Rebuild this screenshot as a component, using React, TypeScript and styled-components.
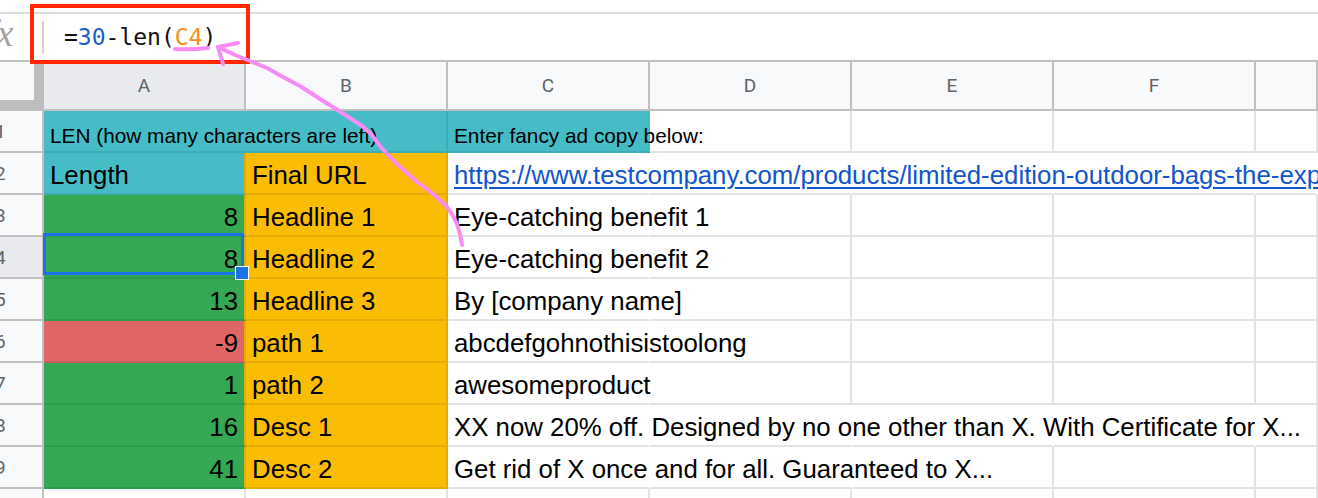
import React from 'react';
import styled, { createGlobalStyle, css } from 'styled-components';

const GlobalStyle = createGlobalStyle`
  html, body {
    margin: 0;
    padding: 0;
    background: #ffffff;
  }
  body {
    font-family: "Liberation Sans", Arial, sans-serif;
    overflow: hidden;
  }
`;

const Page = styled.div`
  position: relative;
  width: 1318px;
  height: 498px;
  overflow: hidden;
  background: #ffffff;
`;

const TopStrip = styled.div`
  height: 12px;
  border-bottom: 2px solid #dadce0;
`;

const FormulaBar = styled.div`
  display: flex;
  align-items: center;
  height: 46px;
  border-bottom: 2px solid #c0c0c0;
`;

const FxLabel = styled.div`
  width: 42px;
  height: 100%;
  overflow: hidden;
  display: flex;
  align-items: center;
  font-family: "Liberation Serif", "DejaVu Serif", serif;
  font-style: italic;
  font-size: 38px;
  color: #a3a3a3;

  span {
    margin-left: -14px;
    margin-top: -8px;
  }
`;

const Divider = styled.div`
  width: 2px;
  height: 33px;
  background: #d3d3d3;
`;

const Formula = styled.div`
  margin-left: 20px;
  font-family: "DejaVu Sans Mono", "Liberation Mono", monospace;
  font-size: 23px;
  white-space: pre;
  color: #111111;
`;

const Token = styled.span<{ $kind?: 'num' | 'ref' }>`
  color: ${p => (p.$kind === 'num' ? '#1a5fd0' : p.$kind === 'ref' ? '#f3911c' : '#111111')};
`;

const Sheet = styled.div`
  display: grid;
  grid-template-columns: 44px repeat(6, 202px) 1fr;
  grid-template-rows: 49px repeat(10, 42px);
`;

const Corner = styled.div`
  background: #f8f9fa;
  border-bottom: 2px solid #c0c0c0;
  box-shadow: inset -10px -9px 0 #bdbdbd;
`;

const ColHead = styled.div<{ $active?: boolean }>`
  display: flex;
  align-items: center;
  justify-content: center;
  background: ${p => (p.$active ? '#e8eaed' : '#f8f9fa')};
  border-right: 2px solid #c0c0c0;
  border-bottom: 2px solid #c0c0c0;
  font-family: Roboto, "Liberation Sans", sans-serif;
  font-size: 19px;
  color: #5f6368;
`;

const RowHead = styled.div<{ $active?: boolean }>`
  display: flex;
  align-items: center;
  overflow: hidden;
  background: ${p => (p.$active ? '#e8eaed' : '#f8f9fa')};
  border-right: 2px solid #c0c0c0;
  border-bottom: 2px solid #c0c0c0;
  font-family: Roboto, "Liberation Sans", sans-serif;
  font-size: 19px;
  color: #5f6368;

  span {
    margin-left: -5px;
  }
`;

const Cell = styled.div<{
  $fill?: string;
  $line?: string;
  $rightLine?: string;
  $align?: 'left' | 'right';
  $small?: boolean;
  $open?: boolean;
  $span?: number;
  $selected?: boolean;
}>`
  position: relative;
  min-width: 0;
  display: flex;
  align-items: flex-end;
  justify-content: ${p => (p.$align === 'right' ? 'flex-end' : 'flex-start')};
  grid-column: ${p => (p.$span ? `span ${p.$span}` : 'auto')};
  padding: 0 6px ${p => (p.$small ? '3px' : '4px')};
  background: ${p => p.$fill ?? 'transparent'};
  border-right: 2px solid
    ${p => (p.$open ? 'transparent' : p.$rightLine ?? p.$line ?? '#e2e3e3')};
  border-bottom: 2px solid ${p => p.$line ?? '#e2e3e3'};
  white-space: nowrap;
  font-size: ${p => (p.$small ? '20.8px' : '25.8px')};
  line-height: ${p => (p.$small ? '24px' : '28px')};
  color: #000000;

  ${p =>
    p.$selected &&
    css`
      &::after {
        content: '';
        position: absolute;
        left: -1px;
        top: -4px;
        right: 0;
        bottom: 2px;
        border: 3px solid #1a73e8;
      }
      &::before {
        content: '';
        position: absolute;
        right: -5px;
        bottom: -3px;
        width: 12px;
        height: 12px;
        background: #1a73e8;
        border: 1px solid #ffffff;
        z-index: 2;
      }
    `}
`;

const Link = styled.span`
  color: #1155cc;
  text-decoration: underline;
  text-underline-offset: 3px;
`;

const Overlay = styled.svg`
  position: absolute;
  left: 0;
  top: 0;
  pointer-events: none;
`;

const RedBox = styled.div`
  position: absolute;
  left: 30px;
  top: 4px;
  width: 220px;
  height: 60px;
  box-sizing: border-box;
  border: 4px solid #ff2600;
  pointer-events: none;
`;

const FILLS = {
  teal: { fill: '#46bdc6', line: '#3fabb3' },
  amber: { fill: '#fbbc04', line: '#e6ac06' },
  green: { fill: '#34a853', line: '#2f9a4b' },
  red: { fill: '#e06666', line: '#cd5d5d' },
};

type FillKey = keyof typeof FILLS;

interface SheetRow {
  num: number;
  a?: string;
  aFill?: FillKey;
  aAlign?: 'left' | 'right';
  b?: string;
  bFill?: FillKey;
  c?: string;
  link?: boolean;
  spill: number;
}

const ROWS: SheetRow[] = [
  { num: 2, a: 'Length', aFill: 'teal', aAlign: 'left', b: 'Final URL', bFill: 'amber', c: 'https://www.testcompany.com/products/limited-edition-outdoor-bags-the-explorer-series', link: true, spill: 5 },
  { num: 3, a: '8', aFill: 'green', b: 'Headline 1', bFill: 'amber', c: 'Eye-catching benefit 1', spill: 1 },
  { num: 4, a: '8', aFill: 'green', b: 'Headline 2', bFill: 'amber', c: 'Eye-catching benefit 2', spill: 1 },
  { num: 5, a: '13', aFill: 'green', b: 'Headline 3', bFill: 'amber', c: 'By [company name]', spill: 1 },
  { num: 6, a: '-9', aFill: 'red', b: 'path 1', bFill: 'amber', c: 'abcdefgohnothisistoolong', spill: 1 },
  { num: 7, a: '1', aFill: 'green', b: 'path 2', bFill: 'amber', c: 'awesomeproduct', spill: 1 },
  { num: 8, a: '16', aFill: 'green', b: 'Desc 1', bFill: 'amber', c: 'XX now 20% off. Designed by no one other than X. With Certificate for X...', spill: 4 },
  { num: 9, a: '41', aFill: 'green', b: 'Desc 2', bFill: 'amber', c: 'Get rid of X once and for all. Guaranteed to X...', spill: 2 },
  { num: 10, spill: 0 },
];

const COLS = ['A', 'B', 'C', 'D', 'E', 'F', ''];

const Arrow = () => (
  <Overlay width="1318" height="498" viewBox="0 0 1318 498">
    <g fill="none" stroke="#f78cf5" strokeWidth="4" strokeLinecap="round" strokeLinejoin="round">
      <polyline points="462,245 460,234 457,224 453,216 447,207 438,198 428,190 416,181 407,173 397,164 389,156 380,146 371,134 362,126 353,120 342,113 333,107 320,99 300,86 283,77 267,68 250,61 235,55 218,47" />
      <polyline points="238,43 218,47 223,64" />
      <path d="M175 49 Q 190 50 208 48" />
    </g>
  </Overlay>
);

export default function App() {
  return (
    <Page>
      <GlobalStyle />
      <TopStrip />
      <FormulaBar>
        <FxLabel>
          <span>fx</span>
        </FxLabel>
        <Divider />
        <Formula>
          =<Token $kind="num">30</Token>-len(<Token $kind="ref">C4</Token>)
        </Formula>
      </FormulaBar>

      <Sheet>
        <Corner />
        {COLS.map((c, i) => (
          <ColHead key={i} $active={c === 'A'}>
            {c}
          </ColHead>
        ))}

        {/* row 1: merged header + note */}
        <RowHead>
          <span>1</span>
        </RowHead>
        <Cell $span={2} $fill={FILLS.teal.fill} $line={FILLS.teal.line} $small>
          LEN (how many characters are left)
        </Cell>
        <Cell $fill={FILLS.teal.fill} $line={FILLS.teal.line} $small $open>
          Enter fancy ad copy below:
        </Cell>
        <Cell />
        <Cell />
        <Cell />
        <Cell />

        {ROWS.map(row => {
          const a = row.aFill ? FILLS[row.aFill] : undefined;
          const b = row.bFill ? FILLS[row.bFill] : undefined;
          return (
            <React.Fragment key={row.num}>
              <RowHead $active={row.num === 4}>
                <span>{row.num}</span>
              </RowHead>
              <Cell
                $fill={a?.fill}
                $line={a?.line}
                $rightLine={b ? b.line : undefined}
                $align={row.aAlign ?? 'right'}
                $selected={row.num === 4}
              >
                {row.a}
              </Cell>
              <Cell $fill={b?.fill} $line={b?.line}>
                {row.b}
              </Cell>
              <Cell $open={row.spill >= 1}>
                {row.link ? <Link>{row.c}</Link> : row.c}
              </Cell>
              <Cell $open={row.spill >= 2} />
              <Cell $open={row.spill >= 3} />
              <Cell $open={row.spill >= 4} />
              <Cell $open={row.spill >= 5} />
            </React.Fragment>
          );
        })}
      </Sheet>

      <RedBox />
      <Arrow />
    </Page>
  );
}
